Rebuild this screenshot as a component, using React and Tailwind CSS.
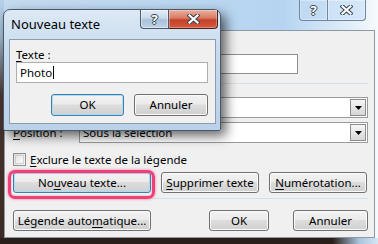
import React from "react";

// mnemonic letter, underlined like Windows access keys
const U = ({ children }) => (
  <span className="underline decoration-1 underline-offset-[2px]">{children}</span>
);

function Btn({ className = "", children, isDefault = false }) {
  return (
    <div
      className={`flex h-[21px] shrink-0 items-center justify-center rounded-[3px] border bg-[linear-gradient(180deg,#f3f3f3_0%,#ebebeb_45%,#dddddd_50%,#cfcfcf_100%)] text-black ${
        isDefault
          ? "border-[#3c7fb1] shadow-[inset_0_0_0_1px_#a9dcf6]"
          : "border-[#707070] shadow-[inset_0_0_0_1px_#fbfbfb]"
      } ${className}`}
    >
      {children}
    </div>
  );
}

function Combo({ value }) {
  return (
    <div className="flex h-[21px] w-[289px] items-center border border-[#9a9a9a] bg-white pl-[3px]">
      <span className="flex-1 truncate">{value}</span>
      <div className="mr-[1px] flex h-[17px] w-[16px] items-center justify-center border border-[#8c8c8c] bg-[linear-gradient(180deg,#f6f6f6,#d6d6d6)]">
        <svg width="7" height="4" viewBox="0 0 7 4">
          <path d="M0 0h7L3.5 4z" fill="#000" />
        </svg>
      </div>
    </div>
  );
}

const XGlyph = () => (
  <svg width="13" height="10" viewBox="0 0 13 10">
    <path d="M2.5 1.5L10.5 8.5M10.5 1.5L2.5 8.5" stroke="#3a434d" strokeWidth="4.2" strokeLinecap="square" />
    <path d="M2.5 1.5L10.5 8.5M10.5 1.5L2.5 8.5" stroke="#fff" strokeWidth="2.2" strokeLinecap="square" />
  </svg>
);

const QGlyph = () => (
  <span className="text-[13px] font-bold leading-none text-white [text-shadow:1px_0_#3a434d,-1px_0_#3a434d,0_1px_#3a434d,0_-1px_#3a434d]">
    ?
  </span>
);

export default function App() {
  return (
    <div className="relative h-[244px] w-[378px] overflow-hidden bg-[linear-gradient(90deg,#2b1f1b_0%,#2b1f1b_88%,#a9c4dc_95%,#d5e6f4_100%)] font-['Noto_Sans',sans-serif] text-[11.5px] text-black">
      {/* Légende window (behind) */}
      <div className="flex h-[238px] w-full">
        <div className="w-[4px] bg-[linear-gradient(180deg,#b7d1ea_0%,#9db8cf_15%,#4a3530_40%,#3b2a25_100%)]" />
        <div className="flex flex-1 flex-col bg-[linear-gradient(90deg,#c4dbef_0%,#b6d4f1_75%,#e4f0fa_94%,#f6fafd_100%)]">
          {/* title bar */}
          <div className="flex h-[30px] justify-end pr-[12px]">
            <div className="flex h-[21px]">
              <div className="flex w-[29px] items-center justify-center rounded-bl-[4px] border border-t-0 border-[#71859a] bg-[#bcd8f2]/60 shadow-[inset_0_0_0_1px_rgba(255,255,255,0.35)]">
                <QGlyph />
              </div>
              <div className="flex w-[38px] items-center justify-center rounded-br-[4px] border border-l-0 border-t-0 border-[#71859a] bg-[#c8e0f6]/60 shadow-[inset_0_0_0_1px_rgba(255,255,255,0.35)]">
                <XGlyph />
              </div>
            </div>
          </div>

          {/* client area */}
          <div className="flex h-[208px] w-[371px] flex-col border border-[#8e99a4] bg-[#f0f0f0] pl-[8px] pr-[6px] pt-[23px]">
            <div className="flex h-[20px] items-center">
              <span className="w-[66px]" />
              <div className="h-[20px] w-[219px] border border-[#8f8f8f] bg-white" />
            </div>

            <div className="mt-[9px] h-px bg-[#d5dfe5]" />

            <div className="mt-[13px] flex items-center">
              <span className="w-[66px]" />
              <Combo value="" />
            </div>

            <div className="mt-[4px] flex items-center">
              <span className="w-[66px]">
                <U>P</U>osition :
              </span>
              <Combo value="Sous la sélection" />
            </div>

            <div className="mt-[10px] flex h-[13px] items-center gap-[4px]">
              <div className="h-[13px] w-[13px] border border-[#8e8f8f] bg-[linear-gradient(135deg,#d9d9d9,#fbfbfb)] p-[1px]">
                <div className="h-full w-full border border-[#d0d0d0] bg-[linear-gradient(135deg,#e2e2e2,#fdfdfd)]" />
              </div>
              <span>
                <U>E</U>xclure le texte de la légende
              </span>
            </div>

            <div className="mt-[6px] flex gap-[10px]">
              <div className="relative">
                <Btn isDefault className="w-[138px]">
                  No<U>u</U>veau texte...
                </Btn>
                {/* annotation highlight */}
                <div className="pointer-events-none absolute -bottom-[6px] -left-[5px] -right-[4px] -top-[2px] rounded-[7px] border-[3px] border-[#ef4078] shadow-[0_0_3px_rgba(239,64,120,0.7),inset_0_0_2px_rgba(239,64,120,0.6)]" />
              </div>
              <Btn className="w-[98px]">
                <U>S</U>upprimer texte
              </Btn>
              <Btn className="w-[98px]">
                <U>N</U>umérotation...
              </Btn>
            </div>

            <div className="mt-[5px] h-px bg-[#d5dfe5]" />

            <div className="mt-[11px] flex">
              <Btn className="w-[138px]">
                Légende auto<U>m</U>atique...
              </Btn>
              <Btn className="ml-auto w-[60px]">OK</Btn>
              <Btn className="ml-[24px] w-[75px]">Annuler</Btn>
            </div>
          </div>
        </div>
      </div>

      {/* Nouveau texte dialog (front) */}
      <div className="absolute left-[3px] top-[9px] flex h-[122px] w-[218px] flex-col rounded-b-[2px] rounded-t-[7px] border border-[#49596a] bg-[linear-gradient(180deg,#dde9f5_0%,#c6dbef_35%,#b9d1e9_100%)] shadow-[5px_5px_12px_rgba(0,0,0,0.6)]">
        <div className="flex h-[29px]">
          <div className="pl-[7px] pt-[5px] text-[13px]">Nouveau texte</div>
          <div className="ml-auto mr-[2px] flex h-[19px]">
            <div className="flex w-[29px] items-center justify-center rounded-bl-[4px] border border-t-0 border-[#4b5b6c] bg-[linear-gradient(180deg,#e3edf7_0%,#c7d9eb_45%,#a9c2da_55%,#bdd2e6_100%)] shadow-[inset_0_0_0_1px_rgba(255,255,255,0.45)]">
              <QGlyph />
            </div>
            <div className="flex w-[49px] items-center justify-center rounded-br-[4px] border border-l-0 border-t-0 border-[#4d1f1a] bg-[linear-gradient(180deg,#eab0a0_0%,#d97a62_45%,#c5412a_55%,#d45a3e_100%)] shadow-[inset_0_0_0_1px_rgba(255,255,255,0.3)]">
              <XGlyph />
            </div>
          </div>
        </div>

        <div className="ml-[5px] mr-[4px] flex h-[85px] flex-col border border-[#8d9bab] bg-[#f0f0f0] pl-[6px] pr-[7px] pt-[7px]">
          <div className="h-[15px] leading-[15px]">
            <U>T</U>exte :
          </div>
          <div className="flex h-[21px] items-center border border-[#abadb3] bg-white pl-[3px]">
            <span>Photo</span>
            <span className="ml-[1px] h-[13px] w-px bg-black" />
          </div>
          <div className="mt-[11px] flex justify-end gap-[10px]">
            <Btn isDefault className="h-[22px] w-[73px]">
              OK
            </Btn>
            <Btn className="h-[22px] w-[74px]">Annuler</Btn>
          </div>
        </div>
      </div>
    </div>
  );
}
